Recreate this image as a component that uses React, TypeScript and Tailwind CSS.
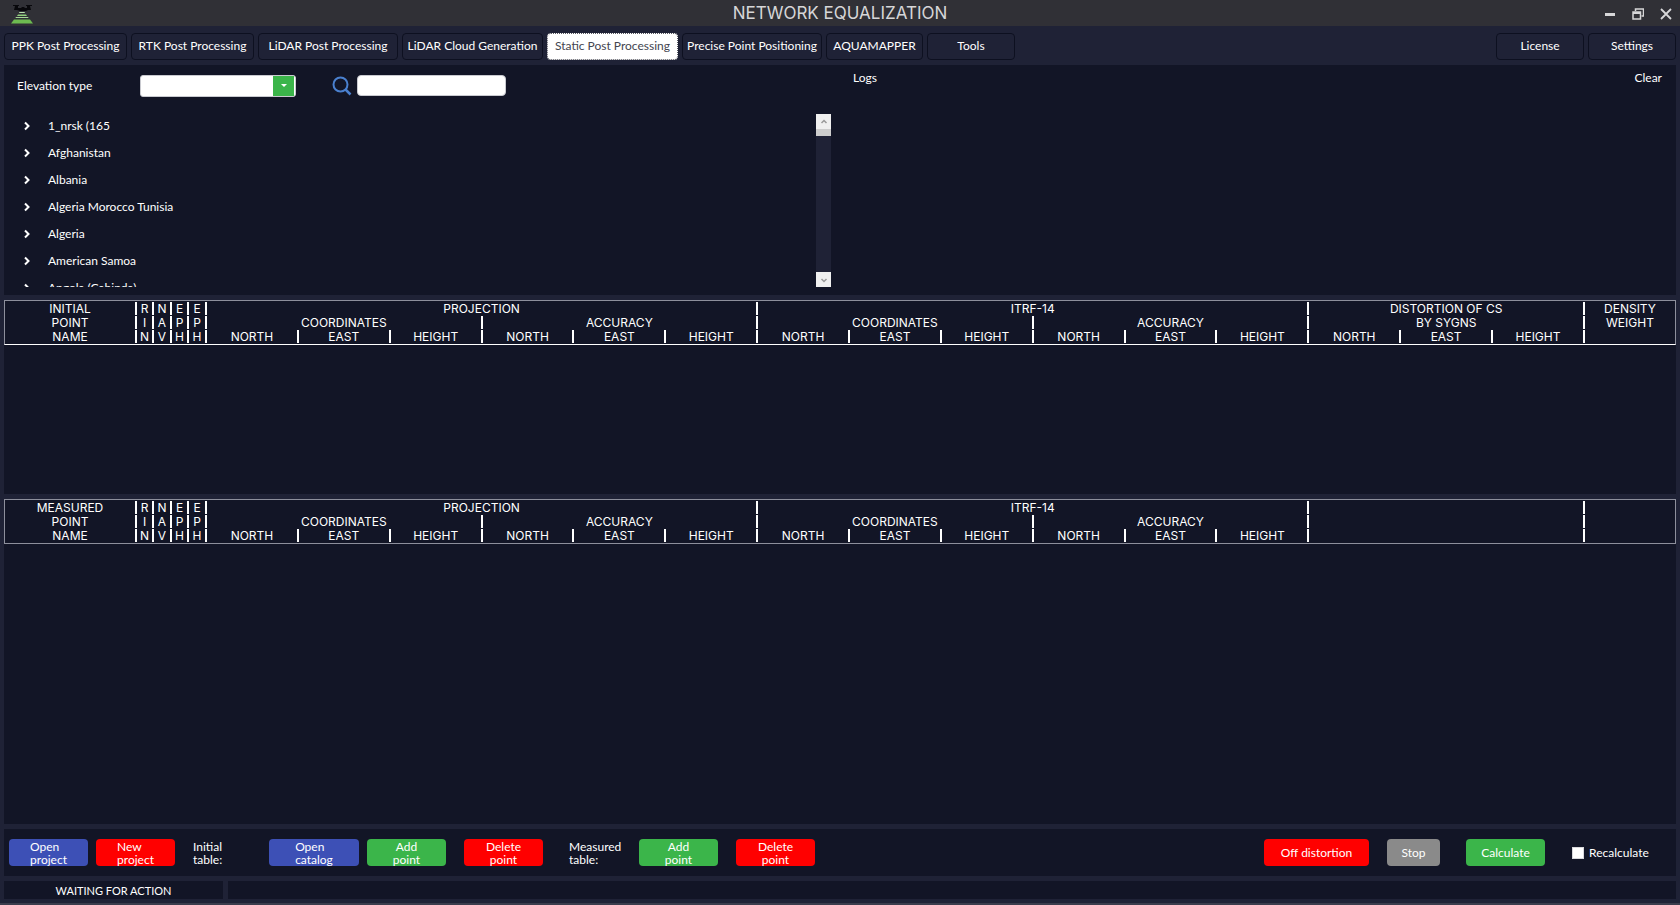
import { useState } from "react";
import clsx from "clsx";

const tabs = [
  { name: "PPK Post Processing", width: "w-[123px]" },
  { name: "RTK Post Processing", width: "w-[123px]" },
  { name: "LiDAR Post Processing", width: "w-[140px]" },
  { name: "LiDAR Cloud Generation", width: "w-[141px]" },
  { name: "Static Post Processing", width: "w-[131px]" },
  { name: "Precise Point Positioning", width: "w-[140px]" },
  { name: "AQUAMAPPER", width: "w-[97px]" },
  { name: "Tools", width: "w-[88px]" },
];

const regions = [
  "1_nrsk (165",
  "Afghanistan",
  "Albania",
  "Algeria Morocco Tunisia",
  "Algeria",
  "American Samoa",
  "Angola (Cabinda)",
];

const axes = ["NORTH", "EAST", "HEIGHT"];

const Logo = () => (
  <svg viewBox="0 0 24 20" className="w-6 h-5" aria-hidden="true">
    <path d="M3 1h6v1H8v2h3l1-1h2l1 1h2V2h-1V1h6v1h-2l1 4h-3l-2 1h-6L7 6H4l1-4H3z" fill="#08080c" />
    <path d="M9.500 8h5l.6 1H8.900z" fill="#b9dfae" />
    <path d="M8 10.500h8l1 1.500H7z" fill="#8fce7c" />
    <path d="M6 13h12l.6 1H5.400z" fill="#a5d896" />
    <path d="M4 15.500h16l3 4H1z" fill="#6dbb50" />
  </svg>
);

const TitleBar = () => (
  <header className="grid grid-cols-3 items-center h-[26px] bg-[#303036] text-[#d6d6d8]">
    <div className="pt-px pl-[10px]">
      <Logo />
    </div>
    <h1 className="text-center text-[17px] leading-[26px] font-['Inter',sans-serif]">NETWORK EQUALIZATION</h1>
    <div className="flex justify-end gap-4 pt-[2px] pr-2">
      <button aria-label="Minimize">
        <svg viewBox="0 0 12 12" className="w-3 h-3">
          <path d="M1 6.500h10" stroke="currentColor" strokeWidth="3" />
        </svg>
      </button>
      <button aria-label="Restore">
        <svg viewBox="0 0 12 12" className="w-3 h-3" fill="none" stroke="currentColor">
          <path d="M3.500 3V1h8v7H9.500" strokeWidth="1.500" />
          <path d="M1 4h7.500v7H1z" strokeWidth="1.500" />
          <path d="M1 5h7.500" strokeWidth="2" />
        </svg>
      </button>
      <button aria-label="Close">
        <svg viewBox="0 0 12 12" className="w-3 h-3">
          <path d="M1 1l10 10M11 1L1 11" stroke="currentColor" strokeWidth="1.800" />
        </svg>
      </button>
    </div>
  </header>
);

type TabButtonProps = { name: string; width: string; active?: boolean; onClick?: () => void };

const TabButton = ({ name, width, active, onClick }: TabButtonProps) => (
  <button
    onClick={onClick}
    className={clsx(
      "h-[27px] pb-px rounded-[4px] border whitespace-nowrap",
      width,
      active ? "bg-white text-[#44454f] border-dotted border-[#55565f]" : "border-[#0d1020]"
    )}
  >
    {name}
  </button>
);

const RegionTree = () => (
  <div className="flex h-[174px] mt-4">
    <ul className="flex-1 overflow-hidden">
      {regions.map((region) => (
        <li key={region}>
          <button className="flex items-center h-[27px] pl-5 pb-px gap-[18px]">
            <svg viewBox="0 0 6 10" className="w-[6px] h-[10px]" fill="none">
              <path d="M1 1.500L4.500 5L1 8.500" stroke="white" strokeWidth="2" />
            </svg>
            {region}
          </button>
        </li>
      ))}
    </ul>
    <div className="flex flex-col w-[15px] mt-px bg-[#1f2236]">
      <button aria-label="Scroll up" className="flex items-center justify-center h-[15px] bg-[#f0f0f0]">
        <svg viewBox="0 0 8 8" className="w-2 h-2" fill="none">
          <path d="M1.500 5L4 2.500L6.500 5" stroke="#9a9a9a" strokeWidth="1.500" />
        </svg>
      </button>
      <div className="h-[7px] bg-[#cdcdcd]" />
      <button aria-label="Scroll down" className="flex items-center justify-center h-[15px] mt-auto bg-[#f0f0f0]">
        <svg viewBox="0 0 8 8" className="w-2 h-2" fill="none">
          <path d="M1.500 3L4 5.500L6.500 3" stroke="#9a9a9a" strokeWidth="1.500" />
        </svg>
      </button>
    </div>
  </div>
);

const line = "border-r-2 border-white p-0 font-normal whitespace-nowrap";

type PointTableProps = { title: string; distortion?: boolean; edge: string };

const PointTable = ({ title, distortion, edge }: PointTableProps) => (
  <table
    className={clsx(
      "w-full table-fixed border-separate border-spacing-x-0 border-spacing-y-px border text-[12px] leading-[13px] font-['Inter',sans-serif]",
      edge
    )}
  >
    <colgroup>
      <col className="w-[132px]" />
      <col className="w-[17px]" />
      <col className="w-[18px]" />
      <col className="w-[17px]" />
      <col className="w-[18px]" />
      <col span={15} />
      <col className="w-[90px]" />
    </colgroup>
    <thead>
      <tr className="h-[13px]">
        <th className={line}>{title}</th>
        {["R", "N", "E", "E"].map((letter, i) => (
          <th key={i} className={line}>{letter}</th>
        ))}
        <th colSpan={6} className={line}>PROJECTION</th>
        <th colSpan={6} className={line}>ITRF-14</th>
        <th colSpan={3} className={line}>{distortion && "DISTORTION OF CS"}</th>
        <th className="p-0 font-normal">{distortion && "DENSITY"}</th>
      </tr>
      <tr className="h-[13px]">
        <th className={line}>POINT</th>
        {["I", "A", "P", "P"].map((letter, i) => (
          <th key={i} className={line}>{letter}</th>
        ))}
        <th colSpan={3} className={line}>COORDINATES</th>
        <th colSpan={3} className={line}>ACCURACY</th>
        <th colSpan={3} className={line}>COORDINATES</th>
        <th colSpan={3} className={line}>ACCURACY</th>
        <th colSpan={3} className={line}>{distortion && "BY SYGNS"}</th>
        <th className="p-0 font-normal">{distortion && "WEIGHT"}</th>
      </tr>
      <tr className="h-[13px]">
        <th className={line}>NAME</th>
        {["N", "V", "H", "H"].map((letter, i) => (
          <th key={i} className={line}>{letter}</th>
        ))}
        {[...axes, ...axes, ...axes, ...axes].map((axis, i) => (
          <th key={i} className={line}>{axis}</th>
        ))}
        {distortion ? (
          axes.map((axis) => <th key={axis} className={line}>{axis}</th>)
        ) : (
          <th colSpan={3} className={line}></th>
        )}
        <th className="p-0"></th>
      </tr>
    </thead>
  </table>
);

const actionButton = "flex items-center justify-center h-[27px] rounded-[4px] leading-[13px]";

const App = () => {
  const [activeTab, setActiveTab] = useState("Static Post Processing");

  return (
    <div className="flex flex-col min-h-screen bg-[#1f2236] text-white text-[12px] leading-[16px] font-['Lato',sans-serif]">
      <TitleBar />

      <nav className="flex gap-1 px-1 pt-[7px] pb-[5px]">
        {tabs.map((tab) => (
          <TabButton
            key={tab.name}
            name={tab.name}
            width={tab.width}
            active={tab.name === activeTab}
            onClick={() => setActiveTab(tab.name)}
          />
        ))}
        <div className="flex gap-1 ml-auto">
          <TabButton name="License" width="w-[88px]" />
          <TabButton name="Settings" width="w-[88px]" />
        </div>
      </nav>

      <main className="flex flex-col flex-1 gap-[5px] px-1">
        {/* Coordinate system and logs */}
        <section className="grid grid-cols-2 bg-[#121526] pb-2">
          <div className="pt-[9px] pr-[9px]">
            <div className="flex items-center h-[23px] pl-[13px]">
              <label htmlFor="elevation" className="w-[123px]">Elevation type</label>
              <div className="relative">
                <select
                  id="elevation"
                  className="block appearance-none w-[156px] h-[22px] rounded-[3px] border border-[#c9cad0] bg-white text-black"
                >
                  <option></option>
                </select>
                <div className="absolute top-px right-[2px] bottom-px w-[21px] flex items-center justify-center bg-[#3bb54a] pointer-events-none">
                  <svg viewBox="0 0 8 4" className="w-[6px] h-[3px]">
                    <path d="M0 0h8L4 4z" fill="white" />
                  </svg>
                </div>
              </div>
              <label htmlFor="search" aria-label="Search" className="ml-[36px] mr-[5px]">
                <svg viewBox="0 0 20 20" className="w-5 h-5" fill="none" stroke="#4a80cf">
                  <circle cx="8.500" cy="8.500" r="7" strokeWidth="2" />
                  <path d="M13.500 13.500L18.500 18.500" strokeWidth="2.500" />
                </svg>
              </label>
              <input
                id="search"
                type="text"
                className="w-[149px] h-[21px] rounded-[4px] border border-[#c9cad0] bg-white px-1 text-black"
              />
            </div>
            <RegionTree />
          </div>
          <div className="flex items-start justify-between pt-[5px] pl-[13px] pr-[14px]">
            <h2>Logs</h2>
            <button>Clear</button>
          </div>
        </section>

        <section className="flex-[28_1_0px] bg-[#121526]">
          <PointTable title="INITIAL" distortion edge="border-[#8d8f9c] border-b-white" />
        </section>

        <section className="flex-[47_1_0px] bg-[#121526]">
          <PointTable title="MEASURED" edge="border-[#8d8f9c]" />
        </section>

        {/* Actions */}
        <section className="flex items-center h-[47px] bg-[#121526] px-[5px] leading-[13px]">
          <button className={clsx(actionButton, "w-[79px] bg-[#3d50b6] text-left")}>
            <span>Open<br />project</span>
          </button>
          <button className={clsx(actionButton, "w-[79px] ml-2 bg-[#ff0000] text-left")}>
            <span>New<br />project</span>
          </button>
          <p className="w-[76px] ml-[18px]">Initial<br />table:</p>
          <button className={clsx(actionButton, "w-[90px] bg-[#3d50b6] text-left")}>
            <span>Open<br />catalog</span>
          </button>
          <button className={clsx(actionButton, "w-[79px] ml-2 bg-[#3bb54a]")}>
            <span>Add<br />point</span>
          </button>
          <button className={clsx(actionButton, "w-[79px] ml-[18px] bg-[#ff0000]")}>
            <span>Delete<br />point</span>
          </button>
          <p className="w-[70px] ml-[26px]">Measured<br />table:</p>
          <button className={clsx(actionButton, "w-[79px] bg-[#3bb54a]")}>
            <span>Add<br />point</span>
          </button>
          <button className={clsx(actionButton, "w-[79px] ml-[18px] bg-[#ff0000]")}>
            <span>Delete<br />point</span>
          </button>

          <button className={clsx(actionButton, "w-[105px] ml-auto bg-[#ff0000]")}>Off distortion</button>
          <button className={clsx(actionButton, "w-[53px] ml-[18px] bg-[#8a8a8a]")}>Stop</button>
          <button className={clsx(actionButton, "w-[79px] ml-[26px] bg-[#3bb54a]")}>Calculate</button>
          <label className="flex items-center gap-[5px] w-[99px] ml-[27px]">
            <input
              type="checkbox"
              className="appearance-none w-3 h-3 bg-white border border-[#d8d8dc] checked:bg-[#3bb54a]"
            />
            Recalculate
          </label>
        </section>

        <footer className="flex gap-[5px] h-[18px] text-[11px] leading-[19px]">
          <div className="w-[219px] bg-[#121526] text-center">WAITING FOR ACTION</div>
          <div className="flex-1 bg-[#121526]" />
        </footer>
      </main>
      <div className="h-[6px] border-b-2 border-[#3a3c4c]" />
    </div>
  );
};

export default App;
